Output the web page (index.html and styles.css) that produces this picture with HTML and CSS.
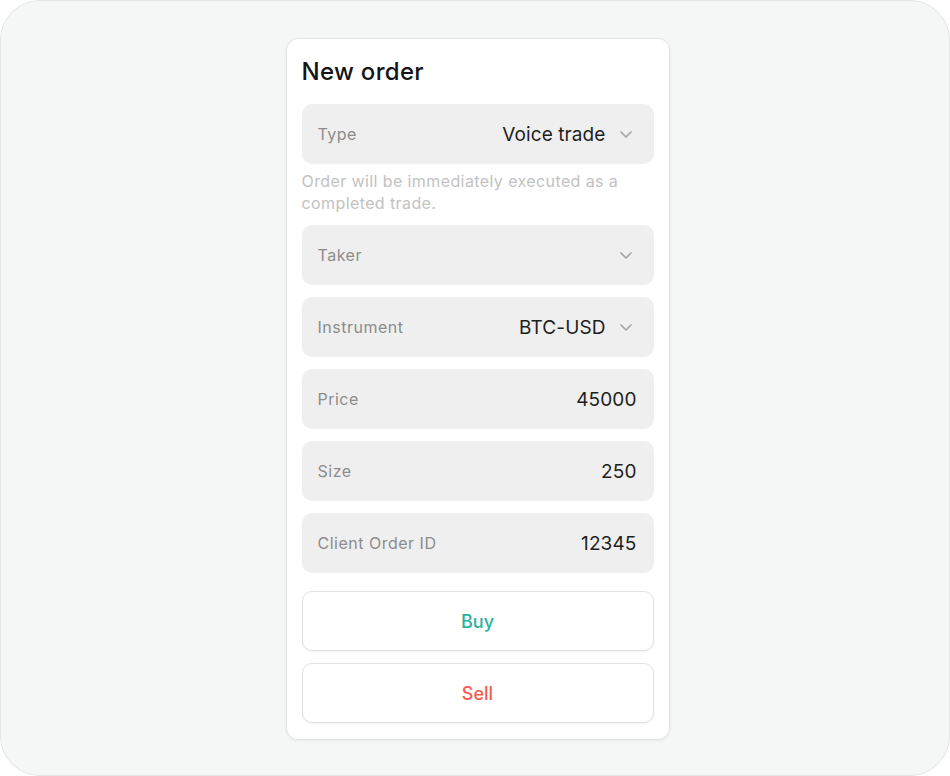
FILE: index.html
```html
<!DOCTYPE html>
<html>
<head>
<meta charset="utf-8">
<link rel="stylesheet" href="styles.css">
</head>
<body>
<div class="frame">
  <div class="card">
    <h1 class="title">New order</h1>
    <div class="field">
      <span class="label">Type</span>
      <span class="right"><span class="value">Voice trade</span><svg class="chev" viewBox="0 0 16 16"><path d="M3 6l5 5 5-5"/></svg></span>
    </div>
    <p class="help">Order will be immediately executed as a completed trade.</p>
    <div class="field">
      <span class="label">Taker</span>
      <span class="right"><svg class="chev" viewBox="0 0 16 16"><path d="M3 6l5 5 5-5"/></svg></span>
    </div>
    <div class="field">
      <span class="label">Instrument</span>
      <span class="right"><span class="value">BTC-USD</span><svg class="chev" viewBox="0 0 16 16"><path d="M3 6l5 5 5-5"/></svg></span>
    </div>
    <div class="field input">
      <span class="label">Price</span>
      <span class="value">45000</span>
    </div>
    <div class="field input">
      <span class="label">Size</span>
      <span class="value">250</span>
    </div>
    <div class="field input">
      <span class="label">Client Order ID</span>
      <span class="value">12345</span>
    </div>
    <button class="btn buy">Buy</button>
    <button class="btn sell">Sell</button>
  </div>
</div>
</body>
</html>
```
FILE: styles.css
```css
* { box-sizing: border-box; }
html, body { margin: 0; padding: 0; background: #ffffff; }
body { font-family: Inter, "Noto Sans", sans-serif; }
.frame {
  width: 950px;
  height: 776px;
  border: 1px solid #e4e6e6;
  border-radius: 40px;
  background: #f5f6f6;
  display: flex;
  justify-content: center;
  align-items: flex-start;
  padding-top: 37px;
  padding-left: 5px;
}
.card {
  width: 384px;
  background: #ffffff;
  border: 1px solid #e2e4e4;
  border-radius: 12px;
  box-shadow: 0 1px 3px rgba(0,0,0,0.06);
  padding: 0 15px 16px;
  display: flex;
  flex-direction: column;
}
.title {
  margin: 19px 0 18px;
  font-size: 24px;
  line-height: 28px;
  font-weight: 500;
  color: #151515;
  letter-spacing: 0.3px;
}
.field {
  height: 60px;
  border-radius: 10px;
  background: #efefef;
  display: flex;
  align-items: center;
  justify-content: space-between;
  padding: 0 20px 0 16px;
  margin-bottom: 12px;
}
.field.input { padding-right: 17px; }
.label {
  font-size: 16px;
  letter-spacing: 0.5px;
  color: #8c8c8c;
}
.right { display: flex; align-items: center; gap: 12px; }
.value {
  font-size: 19px;
  letter-spacing: 0.1px;
  color: #1e1e1e;
}
.chev {
  width: 16px;
  height: 16px;
  fill: none;
  stroke: #a6a6a6;
  stroke-width: 1.7;
  stroke-linecap: round;
  stroke-linejoin: round;
}
.help {
  margin: -6px 0 11px;
  font-size: 16px;
  letter-spacing: 0.4px;
  line-height: 22px;
  color: #c2c2c2;
}
.btn {
  height: 60px;
  border-radius: 10px;
  background: #ffffff;
  border: 1px solid #e2e2e2;
  box-shadow: 0 1px 2px rgba(0,0,0,0.06);
  font-family: Inter, "Noto Sans", sans-serif;
  font-size: 18px;
  font-weight: 500;
  margin-top: 6px;
  margin-bottom: 6px;
}
.btn.buy { color: #2ab39c; }
.btn.sell { color: #f25c4e; margin-bottom: 0; }
```
